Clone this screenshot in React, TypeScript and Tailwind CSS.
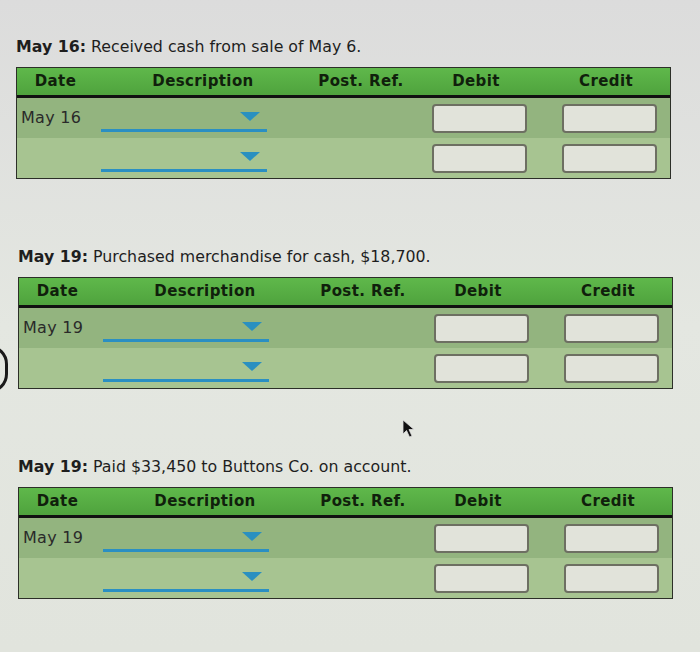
import React from 'react';

interface Entry { date: string; bold: string; text: string; x: string }

const ENTRIES: Entry[] = [
  { date: 'May 16', bold: 'May 16:', text: ' Received cash from sale of May 6.', x: 'ml-[16px]' },
  { date: 'May 19', bold: 'May 19:', text: ' Purchased merchandise for cash, $18,700.', x: 'ml-[18px]' },
  { date: 'May 19', bold: 'May 19:', text: ' Paid $33,450 to Buttons Co. on account.', x: 'ml-[18px]' },
];

const COLS = 'grid grid-cols-[79px_210px_110px_120px_134px]';

function Dropdown() {
  return (
    <div className="relative h-full w-[166px] ml-[5px]">
      <div className="absolute right-[7px] top-[14px] w-0 h-0 border-l-[10px] border-r-[10px] border-t-[9px] border-l-transparent border-r-transparent border-t-[#2a90c0]" />
      <div className="absolute left-0 right-0 bottom-[6px] h-[3px] bg-[#2a8fc2]" />
    </div>
  );
}

function Input() {
  return <div className="h-[29px] w-[95px] rounded-[4px] border-2 border-[#6d6f62] bg-[#e1e3da]" />;
}

function Row({ date, shade }: { date: string; shade: string }) {
  return (
    <div className={`${COLS} h-[40px] items-center ${shade}`}>
      <div className="pl-[4px] text-[16px] tracking-[0.3px] text-[#2a2a2a] self-start pt-[8px]">{date}</div>
      <div className="h-full"><Dropdown /></div>
      <div />
      <div className="flex justify-center pl-[6px]"><Input /></div>
      <div className="flex justify-center pl-[12px]"><Input /></div>
    </div>
  );
}

function Journal({ e }: { e: Entry }) {
  return (
    <div>
      <p className={`${e.x} text-[15.8px] leading-[20px] text-[#1e1e1e]`}>
        <span className="font-bold">{e.bold}</span>{e.text}
      </p>
      <div className={`${e.x} mt-[10px] w-[655px] border border-[#2c2f28]`}>
        <div className={`${COLS} h-[30px] items-center bg-gradient-to-b from-[#5fb84b] to-[#4fa33d] border-b-[3px] border-[#111] text-[15px] tracking-[0.4px] font-bold text-[#10200c] text-center`}>
          <div className="pr-[2px]">Date</div>
          <div className="pl-[4px]">Description</div>
          <div>Post. Ref.</div>
          <div>Debit</div>
          <div className="pl-[6px]">Credit</div>
        </div>
        <Row date={e.date} shade="bg-[#93b47f]" />
        <Row date="" shade="bg-[#a7c491]" />
      </div>
    </div>
  );
}

export default function App() {
  return (
    <div className="relative w-[700px] h-[652px] overflow-hidden bg-gradient-to-b from-[#dcdcdc] via-[#e4e7e1] to-[#e1e4dd] pt-[37px]" style={{ fontFamily: '"DejaVu Sans", Verdana, sans-serif' }}>
      <div className="flex flex-col gap-[68px]">
        {ENTRIES.map((e, i) => <Journal key={i} e={e} />)}
      </div>

      {/* edge of a round button, cut off by the photo */}
      <div className="absolute left-[-30px] top-[345px] w-[38px] h-[48px] rounded-full border-[3px] border-[#1a1a1a]" />

      {/* mouse pointer */}
      <svg className="absolute left-[402px] top-[419px]" width="14" height="20" viewBox="0 0 14 20">
        <path d="M1 1 L1 15 L4.5 11.5 L7.5 18 L10 17 L7 10.5 L12 10.5 Z" fill="#111" stroke="#ddd" strokeWidth="0.8" />
      </svg>
    </div>
  );
}
